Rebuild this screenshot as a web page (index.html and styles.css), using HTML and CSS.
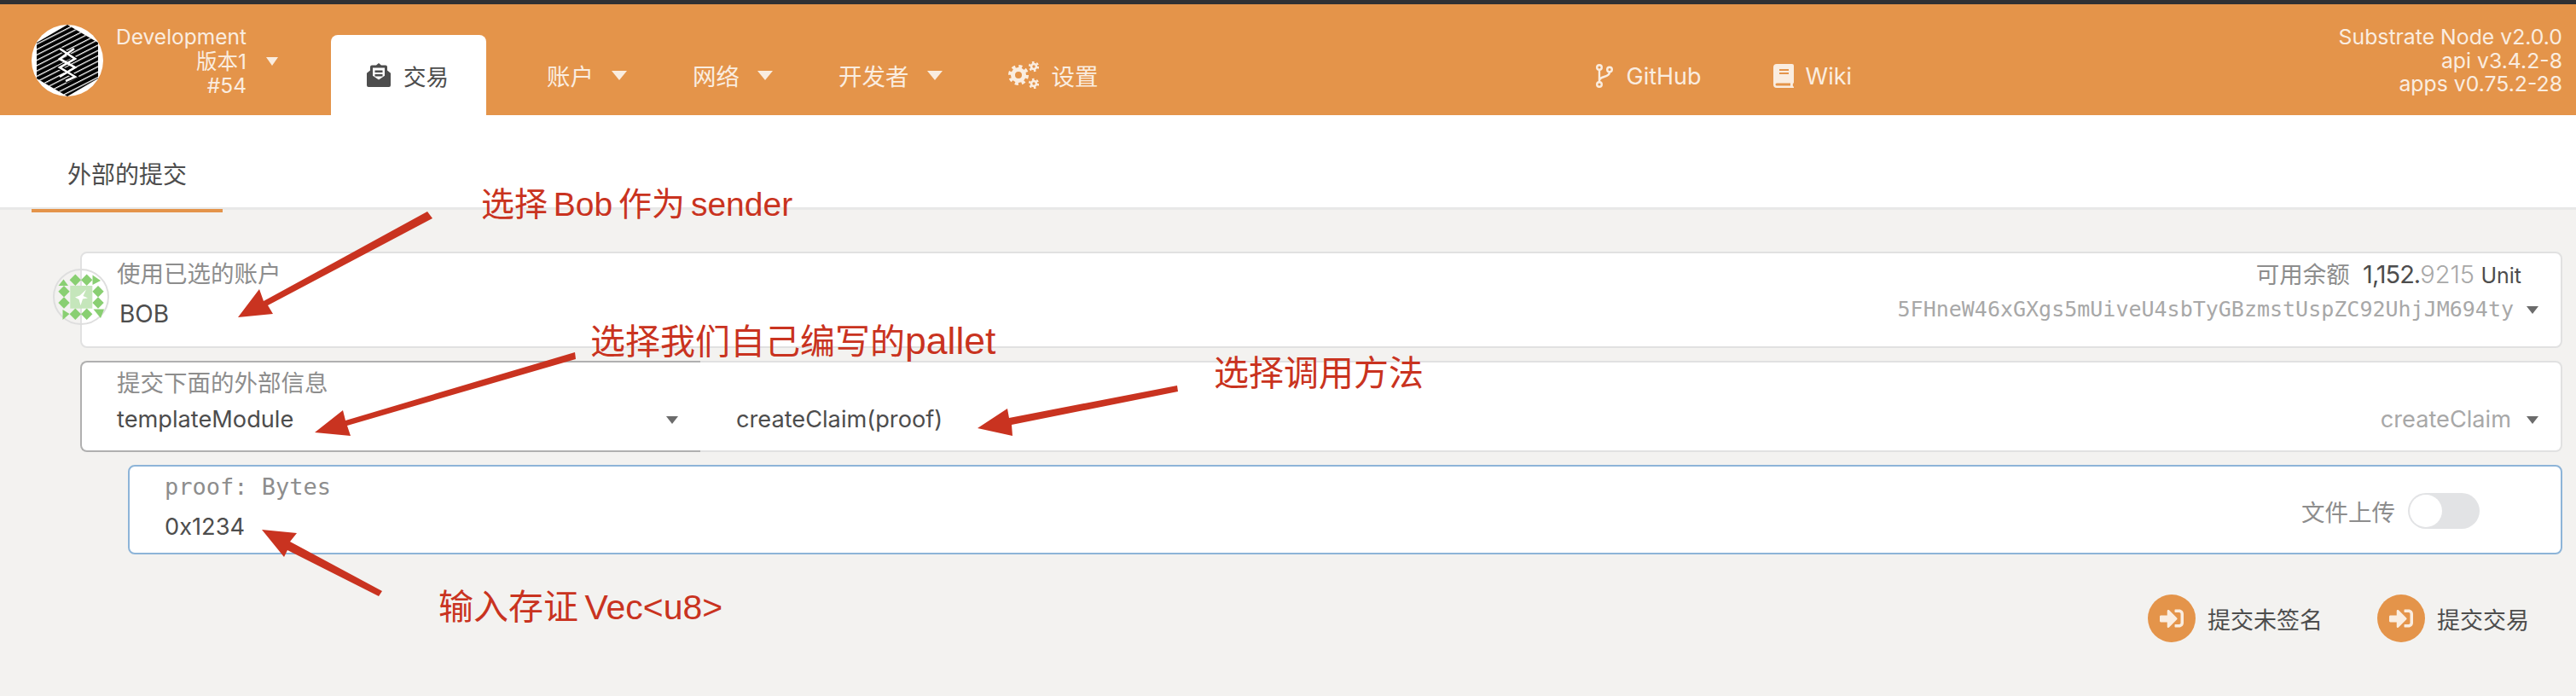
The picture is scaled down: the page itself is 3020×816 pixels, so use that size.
FILE: index.html
```html
<!DOCTYPE html>
<html lang="zh">
    <head>
        <meta charset="UTF-8">
        <title>外部的提交</title>
        <link rel="stylesheet" href="styles.css">
    </head>
    <body>
        <div class="topline"></div>
        <header class="header">
            <svg class="logo" viewBox="0 0 84 84">
                <defs>
                    <pattern id="stripes" width="7" height="5.6" patternUnits="userSpaceOnUse" patternTransform="rotate(-27)">
                        <rect width="7" height="1.3" fill="#fff"></rect>
                    </pattern>
                </defs>
                <circle cx="42" cy="42" r="42" fill="#fff"></circle>
                <polygon points="42,0 78,21 78,63 42,84 6,63 6,21" fill="#000"></polygon>
                <polygon points="42,0 78,21 78,63 42,84 6,63 6,21" fill="url(#stripes)"></polygon>
                <polyline points="33,28 51,40 33,50 51,61 40,66" fill="none" stroke="#000" stroke-width="5"></polyline>
                <polyline points="33,28 51,40 33,50 51,61 40,66" fill="none" stroke="#fff" stroke-width="2.6"></polyline>
                <polyline points="50,28 33,40 51,50 33,61" fill="none" stroke="#fff" stroke-width="2.6"></polyline>
            </svg>
            <div class="chain">
                <div>Development</div>
                <div>版本1</div>
                <div>#54</div>
            </div>
            <span class="caret caret-chain"></span>
            <nav class="nav">
                <a class="tab">
                    <svg class="icon-tx" viewBox="0 0 28 28">
                        <path fill-rule="evenodd" fill="#4d4d4d" d="M14 0l3 2.5h5a2 2 0 0 1 2 2v4l4 3.2V26a2 2 0 0 1-2 2H2a2 2 0 0 1-2-2V11.700l4-3.200v-4a2 2 0 0 1 2-2h5zM7 5.500v9.200l7 4.800 7-4.800V5.500zM9.500 8.500h9v2.400h-9zM9.500 13h9v2.400h-9z"></path>
                    </svg>
                    <span>交易</span>
                </a>
                <a class="nav-item nav-first">账户<span class="caret"></span></a>
                <a class="nav-item">网络<span class="caret"></span></a>
                <a class="nav-item">开发者<span class="caret"></span></a>
                <a class="nav-item">
                    <svg class="icon-cogs" viewBox="0 0 36 32">
                        <g fill="none" stroke="#faede0">
                            <circle cx="12" cy="16" r="6.500" stroke-width="5"></circle>
                            <circle cx="12" cy="16" r="10" stroke-width="4" stroke-dasharray="4 3.850"></circle>
                            <circle cx="30" cy="6" r="3" stroke-width="2.600"></circle>
                            <circle cx="30" cy="6" r="5" stroke-width="2.400" stroke-dasharray="2.500 2.740"></circle>
                            <circle cx="30" cy="26" r="3" stroke-width="2.600"></circle>
                            <circle cx="30" cy="26" r="5" stroke-width="2.400" stroke-dasharray="2.500 2.740"></circle>
                        </g>
                    </svg>
                    设置
                </a>
                <a class="nav-item nav-ext">
                    <svg class="icon-git" viewBox="0 0 20 28">
                        <g fill="none" stroke="#faede0" stroke-width="2.400">
                            <circle cx="4" cy="4" r="2.800"></circle>
                            <circle cx="4" cy="24" r="2.800"></circle>
                            <circle cx="16" cy="6.500" r="2.800"></circle>
                            <path d="M4 7v14M4 19.500c0-6 12-3 12-10"></path>
                        </g>
                    </svg>
                    GitHub
                </a>
                <a class="nav-item nav-wiki">
                    <svg class="icon-book" viewBox="0 0 24 28">
                        <path fill="#faede0" fill-rule="evenodd" d="M4 0h18a2 2 0 0 1 2 2v19.500c0 .8-.5 1.300-1 1.500-.3 1-.3 2 0 3 .6.300 1 .7 1 1.300V28H4a4 4 0 0 1-4-4V4a4 4 0 0 1 4-4zM7 6v2h11V6zM7 10v2h11v-2zM4 22.500a1.500 1.500 0 0 0 0 3h16v-3z"></path>
                    </svg>
                    Wiki
                </a>
            </nav>
            <div class="versions">
                <div>Substrate Node v2.0.0</div>
                <div>api v3.4.2-8</div>
                <div>apps v0.75.2-28</div>
            </div>
        </header>

        <div class="subnav">
            <a class="subtab">外部的提交</a>
        </div>

        <main class="content">
            <section class="card card-account">
                <svg class="avatar" viewBox="0 0 66 66">
                    <circle cx="33" cy="33" r="32" fill="none" stroke="#dedede" stroke-width="2"></circle>
                    <g fill="#89cf72">
                        <polygon points="26.300,6.600 33,13.300 26.300,20 19.600,13.300"></polygon>
                        <polygon points="39.700,6.600 46.400,13.300 39.700,20 33,13.300"></polygon>
                        <polygon points="13,20 19.700,26.700 13,33.400 6.300,26.700"></polygon>
                        <polygon points="13,33.300 19.700,40 13,46.700 6.300,40"></polygon>
                        <polygon points="53,20 59.700,26.700 53,33.400 46.300,26.700"></polygon>
                        <polygon points="53,33.300 59.700,40 53,46.700 46.300,40"></polygon>
                        <polygon points="26.300,46.600 33,53.300 26.300,60 19.600,53.300"></polygon>
                        <polygon points="39.700,46.600 46.400,53.300 39.700,60 33,53.300"></polygon>
                        <polygon points="6.500,20 12.500,12.500 18,20"></polygon>
                        <polygon points="46.500,7.500 56,14 46.500,19"></polygon>
                        <polygon points="11.500,48 19.500,53 11.500,60"></polygon>
                        <polygon points="47.500,47.500 60,47.500 56,58"></polygon>
                    </g>
                    <rect x="20.300" y="20" width="26" height="26.700" fill="#c5e6bb"></rect>
                    <polygon points="39,24.500 35.500,32 41,34.500 35,35.500 32.500,43 30.500,36 26,33.500 31.500,31.500" fill="#fff"></polygon>
                </svg>
                <div class="account-left">
                    <div class="label">使用已选的账户</div>
                    <div class="value value-account">BOB</div>
                </div>
                <div class="account-right">
                    <div class="balance">
                        <span class="balance-label">可用余额</span>
                        <span class="balance-num">1,152.</span><span class="balance-dec">9215</span>
                        <span class="balance-unit">Unit</span>
                    </div>
                    <div class="address">
                        <span>5FHneW46xGXgs5mUiveU4sbTyGBzmstUspZC92UhjJM694ty</span>
                        <span class="caret caret-dark"></span>
                    </div>
                </div>
            </section>

            <section class="card-split">
                <div class="split-left">
                    <div class="label">提交下面的外部信息</div>
                    <div class="split-row">
                        <span class="value">templateModule</span>
                        <span class="caret caret-dark"></span>
                    </div>
                </div>
                <div class="split-right">
                    <span class="value">createClaim(proof)</span>
                    <span class="split-hint">
                        <span class="hint-text">createClaim</span>
                        <span class="caret caret-dark"></span>
                    </span>
                </div>
            </section>

            <section class="card card-param">
                <div>
                    <div class="label label-mono">proof: Bytes</div>
                    <div class="value value-param">0x1234</div>
                </div>
                <div class="upload">
                    <span class="upload-label">文件上传</span>
                    <span class="toggle"><span class="toggle-knob"></span></span>
                </div>
            </section>

            <div class="actions">
                <a class="btn">
                    <span class="btn-icon">
                        <svg viewBox="0 0 512 512"><path fill="#faede0" d="M416 448h-84c-6.600 0-12-5.400-12-12v-40c0-6.600 5.400-12 12-12h84c17.700 0 32-14.300 32-32V160c0-17.700-14.300-32-32-32h-84c-6.600 0-12-5.400-12-12V76c0-6.600 5.400-12 12-12h84c53 0 96 43 96 96v192c0 53-43 96-96 96zm-47-201L201 79c-15-15-41-4.500-41 17v96H24c-13.300 0-24 10.700-24 24v96c0 13.300 10.700 24 24 24h136v96c0 21.500 26 32 41 17l168-168c9.300-9.400 9.300-24.600 0-34z"></path></svg>
                    </span>
                    提交未签名
                </a>
                <a class="btn">
                    <span class="btn-icon">
                        <svg viewBox="0 0 512 512"><path fill="#faede0" d="M416 448h-84c-6.600 0-12-5.400-12-12v-40c0-6.600 5.400-12 12-12h84c17.700 0 32-14.300 32-32V160c0-17.700-14.300-32-32-32h-84c-6.600 0-12-5.400-12-12V76c0-6.600 5.400-12 12-12h84c53 0 96 43 96 96v192c0 53-43 96-96 96zm-47-201L201 79c-15-15-41-4.500-41 17v96H24c-13.300 0-24 10.700-24 24v96c0 13.300 10.700 24 24 24h136v96c0 21.500 26 32 41 17l168-168c9.300-9.400 9.300-24.600 0-34z"></path></svg>
                    </span>
                    提交交易
                </a>
            </div>
        </main>

        <!-- red notes drawn over the screenshot -->
        <svg class="arrows" viewBox="0 0 3020 816">
            <polygon points="501,248 507,256 314,358 320,368 279,372 304,339 309,353"></polygon>
            <polygon points="674,413 675,421 407,499 411,511 369,507 402,481 405,493"></polygon>
            <polygon points="1380,452 1381,459 1186,498 1187,511 1146,502 1181,479 1183,490"></polygon>
            <polygon points="448,693 444,699 337,645 333,653 307,621 348,625 340,635"></polygon>
        </svg>
        <div class="note note-bob">选择 Bob 作为 sender</div>
        <div class="note note-pallet">选择我们自己编写的<span class="note-latin">pallet</span></div>
        <div class="note note-call">选择调用方法</div>
        <div class="note note-input">输入存证 Vec&lt;u8&gt;</div>
    </body>
</html>
```

FILE: styles.css
```css
* {
    box-sizing: border-box;
}

body {
    margin: 0;
    height: 816px;
    overflow: hidden;
    position: relative;
    background-color: #f3f2f0;
    color: #4d4d4d;
    font-family: Inter, "Noto Sans CJK SC", sans-serif;
    font-size: 26px;
}

.topline {
    height: 5px;
    background-color: #2f3033;
}

/* header */
.header {
    height: 130px;
    display: flex;
    align-items: flex-start;
    padding: 24px 16px 0 37px;
    background-color: #e4944a;
    color: #faede0;
}

.logo {
    width: 84px;
    height: 84px;
    flex: none;
}

.chain {
    width: 168px;
    text-align: right;
    font-size: 24.500px;
    line-height: 28.500px;
}

.caret {
    display: inline-block;
    flex: none;
    width: 0;
    height: 0;
    border-left: 9px solid transparent;
    border-right: 9px solid transparent;
    border-top: 11px solid #faede0;
}

.caret-chain {
    margin: 38px 0 0 23px;
    border-left-width: 7.500px;
    border-right-width: 7.500px;
    border-top-width: 10px;
}

.caret-dark {
    border-left-width: 7.500px;
    border-right-width: 7.500px;
    border-top: 9px solid #6b6b6b;
}

.nav {
    display: flex;
    align-items: center;
    height: 130px;
    margin-left: 62px;
    margin-top: -24px;
    flex: none;
    font-size: 27.500px;
}

.nav .tab {
    align-self: flex-end;
    height: 94px;
    width: 182px;
    display: flex;
    align-items: center;
    gap: 15px;
    padding: 0 0 0 42px;
    background-color: #fff;
    border-radius: 8px 8px 0 0;
    color: #4d4d4d;
    font-size: 26.500px;
}

.icon-tx {
    width: 28px;
    height: 28px;
}

.nav-item {
    display: flex;
    align-items: center;
    margin-left: 77px;
    margin-top: 36px;
}

.nav-item .caret {
    margin-left: 21px;
}

.nav-first {
    margin-left: 71px;
}

.icon-cogs {
    width: 36px;
    height: 32px;
    margin-right: 15px;
}

.nav-ext {
    margin-left: 583px;
    margin-top: 38px;
    font-size: 27px;
}

.icon-git {
    width: 20px;
    height: 28px;
    margin-right: 16px;
}

.nav-wiki {
    margin-left: 84px;
    margin-top: 38px;
    font-size: 27px;
}

.icon-book {
    width: 24px;
    height: 28px;
    margin-right: 14px;
}

.versions {
    margin-left: auto;
    text-align: right;
    font-size: 24.800px;
    line-height: 27.500px;
    margin-top: 1px;
}

/* sub tabs */
.subnav {
    height: 111px;
    background-color: #fff;
    border-bottom: 3px solid #e8e8e8;
    padding-left: 37px;
}

.subtab {
    display: block;
    width: 224px;
    height: 114px;
    padding: 54px 0 0 42px;
    border-bottom: 4px solid #e4944a;
    font-size: 28px;
    line-height: 32px;
}

/* form */
.content {
    padding: 49px 16px 0 94px;
}

.card {
    background-color: #fff;
    border: 2px solid #e1e1e1;
    border-radius: 8px;
}

.card-account {
    position: relative;
    height: 113px;
    display: flex;
    justify-content: space-between;
    padding: 9px 26px 0 41px;
}

.avatar {
    position: absolute;
    left: -34px;
    top: 18px;
    width: 66px;
    height: 66px;
}

.label {
    color: #8d8d8d;
    font-size: 27.500px;
    line-height: 30px;
}

.value {
    font-size: 27.200px;
    line-height: 30px;
}

.value-account {
    margin-top: 17px;
    margin-left: 3px;
    font-size: 28px;
}

.account-right {
    display: flex;
    flex-direction: column;
    align-items: flex-end;
}

.balance {
    margin-right: 20px;
    margin-top: 1px;
    line-height: 30px;
    white-space: nowrap;
}

.balance-label {
    font-size: 27.500px;
    color: #8d8d8d;
    margin-right: 8px;
}

.balance-num {
    font-size: 29px;
    letter-spacing: -1px;
}

.balance-dec {
    font-size: 29px;
    font-weight: 300;
    color: #a8a8a8;
}

.balance-unit {
    font-size: 25px;
}

.address {
    display: flex;
    align-items: center;
    gap: 15px;
    margin-top: 10px;
    font-family: "DejaVu Sans Mono", monospace;
    font-size: 25px;
    line-height: 30px;
    color: #a8a8a8;
}

.card-split {
    display: flex;
    height: 107px;
    margin-top: 15px;
}

.split-left {
    width: 727px;
    padding: 9px 26px 0 41px;
    background-color: #fff;
    border: 2px solid #b0b0b0;
    border-right: none;
    border-radius: 8px 0 0 8px;
}

.split-row {
    display: flex;
    align-items: center;
    justify-content: space-between;
    margin-top: 13px;
}

.split-right {
    flex: 1;
    display: flex;
    align-items: flex-end;
    justify-content: space-between;
    padding: 0 26px 21px 42px;
    background-color: #fff;
    border: 2px solid #e1e1e1;
    border-left: none;
    border-radius: 0 8px 8px 0;
}

.split-hint {
    display: flex;
    align-items: center;
    gap: 18px;
    line-height: 30px;
}

.hint-text {
    color: #a8a8a8;
    font-size: 27.200px;
}

.card-param {
    height: 105px;
    margin: 15px 0 0 56px;
    padding: 9px 95px 0 41px;
    border-color: #8db4d8;
    display: flex;
    justify-content: space-between;
}

.label-mono {
    font-family: "DejaVu Sans Mono", monospace;
    font-size: 27px;
}

.value-param {
    margin-top: 17px;
}

.upload {
    display: flex;
    align-items: center;
    gap: 15px;
    height: 82px;
    margin-top: 2px;
}

.upload-label {
    color: #8d8d8d;
    font-size: 27.500px;
}

.toggle {
    display: block;
    width: 84px;
    height: 42px;
    padding: 2px;
    border-radius: 21px;
    background-color: #e2e3e5;
}

.toggle-knob {
    display: block;
    width: 38px;
    height: 38px;
    border-radius: 50%;
    background-color: #fff;
}

.actions {
    display: flex;
    justify-content: flex-end;
    gap: 64px;
    margin-top: 47px;
    padding-right: 39px;
}

.btn {
    display: flex;
    align-items: center;
    gap: 14px;
    font-size: 27px;
}

.btn-icon {
    width: 56px;
    height: 56px;
    display: flex;
    align-items: center;
    justify-content: center;
    border-radius: 50%;
    background-color: #e4944a;
}

.btn-icon svg {
    width: 28px;
    height: 28px;
}

/* annotations */
.arrows {
    position: absolute;
    left: 0;
    top: 0;
    width: 3020px;
    height: 816px;
    fill: #c93320;
}

.note {
    position: absolute;
    color: #c93320;
    font-family: "Liberation Sans", "Noto Sans CJK SC", sans-serif;
    font-size: 41px;
    line-height: 48px;
    white-space: nowrap;
}

.note-bob {
    left: 564px;
    top: 216px;
    font-size: 39px;
    word-spacing: -4px;
}

.note-pallet {
    left: 692px;
    top: 376px;
}

.note-latin {
    font-size: 44.500px;
}

.note-call {
    left: 1423px;
    top: 414px;
}

.note-input {
    left: 514px;
    top: 688px;
    word-spacing: -4px;
}
```
